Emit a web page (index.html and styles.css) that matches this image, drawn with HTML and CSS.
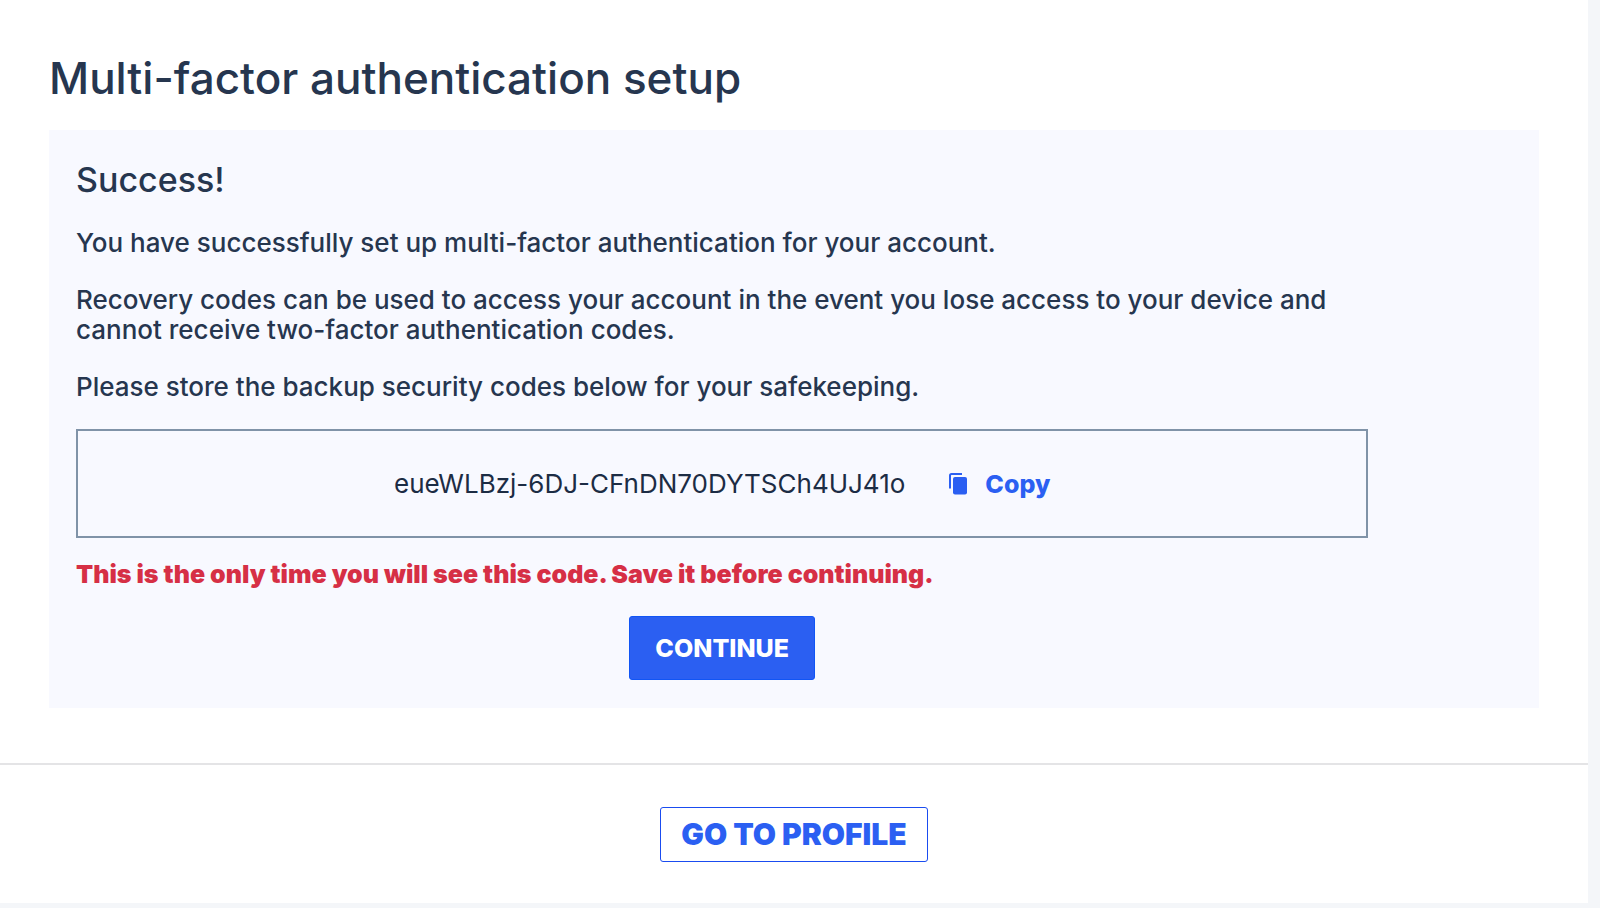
FILE: index.html
```html
<!DOCTYPE html>
<html lang="en">
<head>
<meta charset="utf-8">
<meta name="viewport" content="width=device-width, initial-scale=1">
<title>Multi-factor authentication setup</title>
<link rel="stylesheet" href="styles.css">
</head>
<body>
<div class="card">
  <main class="setup">
    <h1 class="title">Multi-factor authentication setup</h1>
    <section class="panel">
      <div class="panel-content">
        <h2 class="subtitle">Success!</h2>
        <p class="text">You have successfully set up multi-factor authentication for your account.</p>
        <p class="text">Recovery codes can be used to access your account in the event you lose access to your device and cannot receive two-factor authentication codes.</p>
        <p class="text">Please store the backup security codes below for your safekeeping.</p>
        <div class="code-box">
          <span class="code">eueWLBzj-6DJ-CFnDN70DYTSCh4UJ41o</span>
          <button class="copy" type="button">
            <svg class="copy-icon" viewBox="0 0 18 22" aria-hidden="true">
              <path d="M1 15.500V2.500A1.500 1.500 0 0 1 2.500 1H13" fill="none" stroke="currentColor" stroke-width="2"/>
              <rect x="4" y="4" width="14" height="17.500" rx="2" fill="currentColor"/>
            </svg>
            Copy
          </button>
        </div>
        <p class="warning">This is the only time you will see this code. Save it before continuing.</p>
        <button class="continue" type="button">CONTINUE</button>
      </div>
    </section>
  </main>
  <footer class="footer">
    <a class="profile" href="#profile">GO TO PROFILE</a>
  </footer>
</div>
</body>
</html>
```
FILE: styles.css
```css
* {
  box-sizing: border-box;
}

body {
  margin: 0;
  padding: 0 12px 5px 0;
  min-height: 100vh;
  background: #f4f6f9;
  color: #26364f;
  font-family: Inter, "Open Sans", sans-serif;
}

.card {
  background: #fff;
}

.setup {
  padding: 54px 49px 55px;
}

.title {
  margin: 0 0 28px;
  font-size: 44px;
  line-height: 48px;
  font-weight: 500;
}

.panel {
  padding: 30px 27px 28px;
  background: #f8f9ff;
}

.panel-content {
  display: flex;
  flex-direction: column;
  width: 90%;
}

.subtitle {
  margin: 0 0 28px;
  font-size: 34px;
  line-height: 40px;
  font-weight: 500;
}

.text {
  margin: 0 0 27px;
  font-size: 26px;
  line-height: 30px;
  font-weight: 500;
}

.code-box {
  display: flex;
  align-items: center;
  justify-content: center;
  gap: 44px;
  padding: 38px 16px 37px;
  border: 2px solid #8093a8;
}

.code {
  color: #1c2c44;
  font-size: 26px;
  line-height: 30px;
}

.copy {
  display: flex;
  align-items: center;
  gap: 18px;
  padding: 0;
  border: 0;
  background: none;
  color: #2b5ff2;
  font-family: inherit;
  font-size: 25px;
  line-height: 30px;
  font-weight: 800;
  cursor: pointer;
}

.copy-icon {
  width: 18px;
  height: 22px;
}

.warning {
  margin: 21px 0 27px;
  color: #d62f45;
  font-size: 25px;
  line-height: 30px;
  font-weight: 900;
}

.continue {
  align-self: center;
  padding: 16px 25px;
  border: 1px solid #1155f5;
  border-radius: 3px;
  background: #2b5ff2;
  color: #fff;
  font-family: inherit;
  font-size: 25px;
  line-height: 30px;
  font-weight: 800;
  cursor: pointer;
}

.footer {
  display: flex;
  justify-content: center;
  padding: 42px 16px 41px;
  border-top: 2px solid #e4e4e6;
}

.profile {
  padding: 11px 20px;
  border: 1px solid #1a4cf0;
  border-radius: 3px;
  color: #2b5ff2;
  font-size: 30px;
  line-height: 31px;
  font-weight: 900;
  text-decoration: none;
}
```
